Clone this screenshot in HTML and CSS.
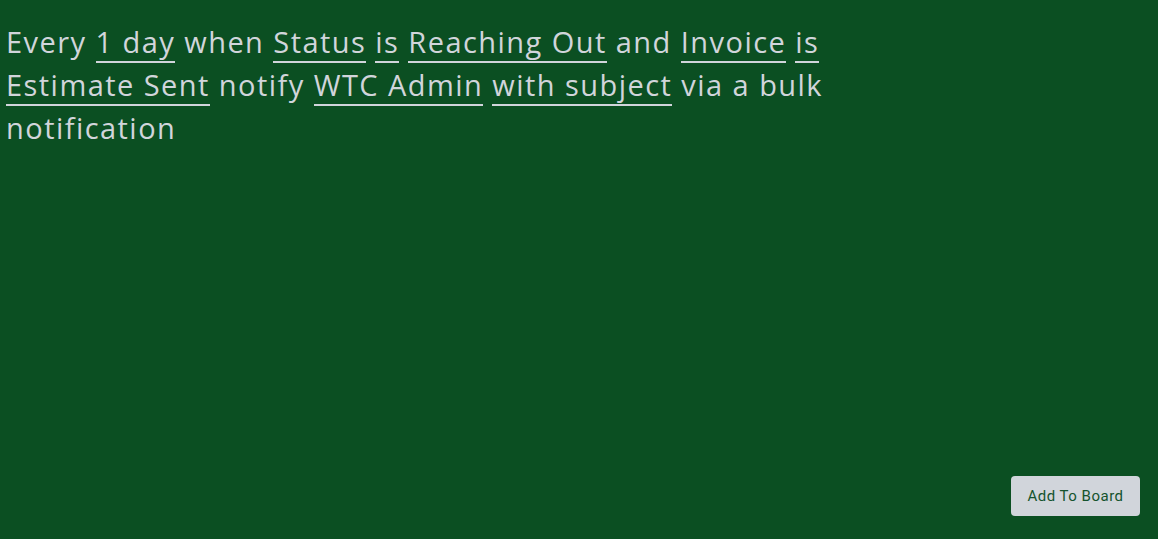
FILE: index.html
```html
<!DOCTYPE html>
<html>
<head>
<meta charset="utf-8">
<link rel="stylesheet" href="styles.css">
</head>
<body>
<div class="page">
  <p class="sentence">Every <span class="token">1 day</span> when <span class="token">Status</span> <span class="token">is</span> <span class="token">Reaching Out</span> and <span class="token">Invoice</span> <span class="token">is</span> <span class="token">Estimate Sent</span> notify <span class="token">WTC Admin</span> <span class="token">with subject</span> via a bulk notification</p>
  <div class="actions">
    <button class="btn">Add To Board</button>
  </div>
</div>
</body>
</html>
```
FILE: styles.css
```css
html, body {
  margin: 0;
  padding: 0;
  background: #0b4f22;
  height: 100%;
}
.page {
  height: 539px;
  box-sizing: border-box;
  display: flex;
  flex-direction: column;
  justify-content: space-between;
  padding: 20px 18px 23px 6px;
}
.sentence {
  margin: 0;
  width: 835px;
  font-family: "Open Sans", sans-serif;
  font-size: 29px;
  line-height: 43px;
  color: #d1d5db;
  letter-spacing: 1.45px;
}
.token {
  border-bottom: 2px solid #d1d5db;
}
.actions {
  display: flex;
  justify-content: flex-end;
}
.btn {
  width: 129px;
  height: 40px;
  border: none;
  border-radius: 4px;
  background: #d1d5db;
  color: #14532d;
  font-family: Roboto, sans-serif;
  font-size: 15px;
  letter-spacing: 0.5px;
  cursor: pointer;
}
```
